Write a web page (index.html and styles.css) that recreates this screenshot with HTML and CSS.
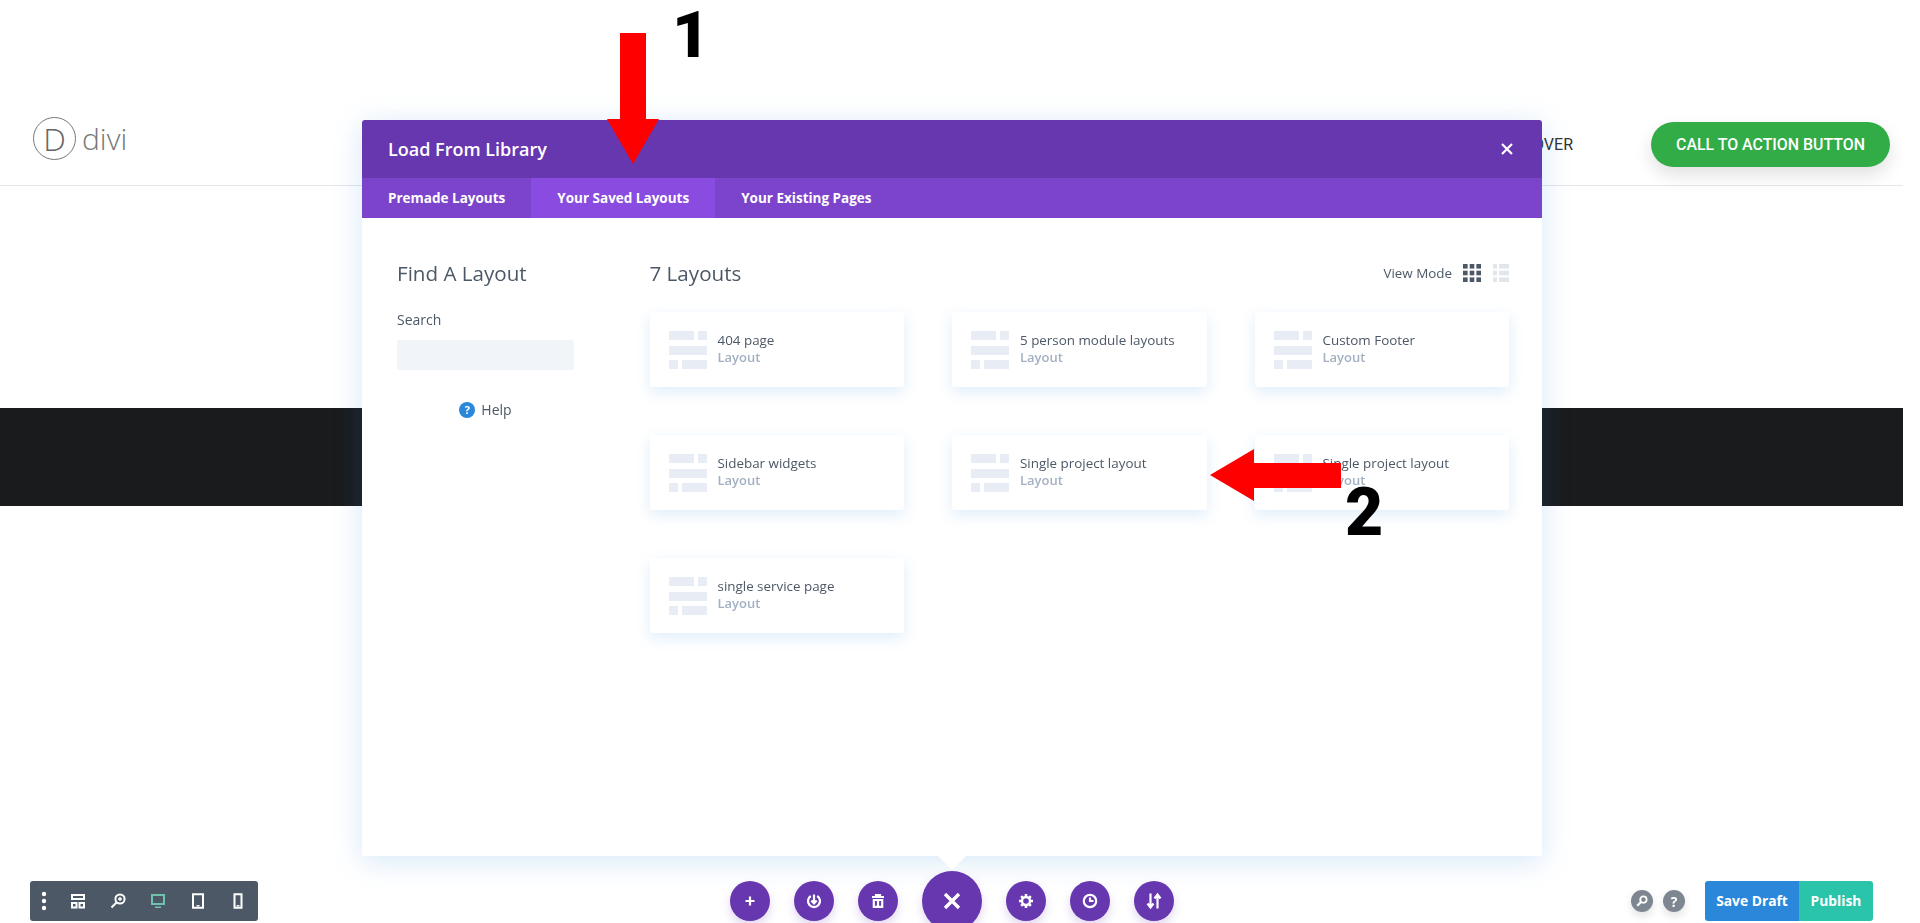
FILE: index.html
```html
<!DOCTYPE html>
<html lang="en">
<head>
  <meta charset="UTF-8" />
  <title>Load From Library</title>
  <link rel="stylesheet" href="styles.css">
</head>
<body>

  <svg class="defs" width="0" height="0">
    <symbol id="thumb" viewBox="0 0 38 38">
      <rect x="0" y="0" width="25" height="9" />
      <rect x="29" y="0" width="9" height="9" />
      <rect x="0" y="15" width="38" height="9" />
      <rect x="0" y="29" width="9" height="9" />
      <rect x="13" y="29" width="25" height="9" />
    </symbol>
  </svg>

  <div class="page">
    <header class="site-header">
      <div class="logo">
        <span class="logo-mark">D</span>
        <span class="logo-word">divi</span>
      </div>
      <div class="nav-right">
        <span class="nav-link">HOVER</span>
        <a class="cta">CALL TO ACTION BUTTON</a>
      </div>
    </header>
    <div class="band"></div>
  </div>

  <div class="modal">
    <div class="modal-title">
      <h2>Load From Library</h2>
      <svg class="close" width="14" height="14" viewBox="0 0 14 14"><path d="M2 2l10 10M12 2L2 12" /></svg>
    </div>
    <nav class="tabs">
      <a class="tab">Premade Layouts</a>
      <a class="tab active">Your Saved Layouts</a>
      <a class="tab">Your Existing Pages</a>
    </nav>
    <div class="modal-body">
      <aside class="filters">
        <h3>Find A Layout</h3>
        <label for="search">Search</label>
        <input id="search" type="text" />
        <div class="help"><span class="help-icon">?</span>Help</div>
      </aside>
      <section class="results">
        <div class="results-head">
          <h3>7 Layouts</h3>
          <div class="view-mode">
            <span>View Mode</span>
            <svg class="view-grid" width="18" height="18" viewBox="0 0 18 18">
              <rect x="0" y="0" width="4.6" height="4.6" /><rect x="6.7" y="0" width="4.6" height="4.6" /><rect x="13.4" y="0" width="4.6" height="4.6" />
              <rect x="0" y="6.7" width="4.6" height="4.6" /><rect x="6.7" y="6.7" width="4.6" height="4.6" /><rect x="13.4" y="6.7" width="4.6" height="4.6" />
              <rect x="0" y="13.4" width="4.6" height="4.6" /><rect x="6.7" y="13.4" width="4.6" height="4.6" /><rect x="13.4" y="13.4" width="4.6" height="4.6" />
            </svg>
            <svg class="view-list" width="16" height="18" viewBox="0 0 16 18">
              <rect x="0" y="0" width="4" height="4.6" /><rect x="6" y="0" width="10" height="4.6" />
              <rect x="0" y="6.7" width="4" height="4.6" /><rect x="6" y="6.7" width="10" height="4.6" />
              <rect x="0" y="13.4" width="4" height="4.6" /><rect x="6" y="13.4" width="10" height="4.6" />
            </svg>
          </div>
        </div>
        <div class="layout-grid">
          <div class="layout-card"><svg class="thumb"><use href="#thumb" /></svg><div class="card-text"><div class="name">404 page</div><div class="kind">Layout</div></div></div>
          <div class="layout-card"><svg class="thumb"><use href="#thumb" /></svg><div class="card-text"><div class="name">5 person module layouts</div><div class="kind">Layout</div></div></div>
          <div class="layout-card"><svg class="thumb"><use href="#thumb" /></svg><div class="card-text"><div class="name">Custom Footer</div><div class="kind">Layout</div></div></div>
          <div class="layout-card"><svg class="thumb"><use href="#thumb" /></svg><div class="card-text"><div class="name">Sidebar widgets</div><div class="kind">Layout</div></div></div>
          <div class="layout-card"><svg class="thumb"><use href="#thumb" /></svg><div class="card-text"><div class="name">Single project layout</div><div class="kind">Layout</div></div></div>
          <div class="layout-card"><svg class="thumb"><use href="#thumb" /></svg><div class="card-text"><div class="name">Single project layout</div><div class="kind">Layout</div></div></div>
          <div class="layout-card"><svg class="thumb"><use href="#thumb" /></svg><div class="card-text"><div class="name">single service page</div><div class="kind">Layout</div></div></div>
        </div>
      </section>
    </div>
    <span class="notch"></span>
  </div>

  <!-- bottom left: view modes -->
  <div class="view-bar">
    <span class="bar-item first"><svg width="14" height="20" viewBox="0 0 14 20"><circle cx="7" cy="3" r="2.2" /><circle cx="7" cy="10" r="2.2" /><circle cx="7" cy="17" r="2.2" /></svg></span>
    <span class="bar-item"><svg width="16" height="16" viewBox="0 0 16 16"><path class="line" d="M2 2h12v4H2zM2 10h4.5v4.5H2zM9.5 10H14v4.5H9.5z" /></svg></span>
    <span class="bar-item"><svg width="16" height="16" viewBox="0 0 16 16"><circle class="line" cx="10" cy="6" r="4.6" /><path class="line" d="M6.5 9.5L1.5 14.5" stroke-width="3" /><path class="line thin" d="M8 6h4M10 4v4" /></svg></span>
    <span class="bar-item"><svg class="on" width="16" height="16" viewBox="0 0 16 16"><path d="M1 1h14v11H1z" /><path d="M5 15h6v-1.5H5z" /><rect class="screen" x="3" y="3" width="10" height="7" /></svg></span>
    <span class="bar-item"><svg width="14" height="16" viewBox="0 0 14 16"><path class="line" d="M2 1.2h10v13.6H2z" /><path class="line thin" d="M5.5 12.8h3" /></svg></span>
    <span class="bar-item"><svg width="10" height="16" viewBox="0 0 10 16"><path class="line" d="M1.5 1.2h7v13.6h-7z" /><path class="line thin" d="M3.5 12.8h3" /></svg></span>
  </div>

  <!-- bottom centre: builder actions -->
  <div class="dock">
    <span class="dock-btn"><svg width="14" height="14" viewBox="0 0 14 14"><path d="M7 2.5v9M2.5 7h9" /></svg></span>
    <span class="dock-btn"><svg width="16" height="16" viewBox="0 0 16 16"><path d="M4.8 3A6 6 0 1 0 11.2 3" /><path d="M8 1.5v8.5M5.3 7.5L8 10.4l2.7-2.9" /></svg></span>
    <span class="dock-btn"><svg width="14" height="16" viewBox="0 0 14 16"><path d="M1 4h12M5 3.5V2h4v1.5M2.8 7h8.4v6.8H2.8zM7 7v6.8" /></svg></span>
    <span class="dock-btn large"><svg width="20" height="20" viewBox="0 0 20 20"><path d="M3 3l14 14M17 3L3 17" /></svg></span>
    <span class="dock-btn"><svg width="16" height="16" viewBox="0 0 16 16"><circle cx="8" cy="8" r="4" stroke-width="2.4" /><path stroke-width="2.6" d="M8 1v2.5M8 12.5V15M1 8h2.5M12.5 8H15M3.2 3.2l1.6 1.6M11.2 11.2l1.6 1.6M12.8 3.2l-1.6 1.6M4.8 11.2l-1.6 1.6" /></svg></span>
    <span class="dock-btn"><svg width="16" height="16" viewBox="0 0 16 16"><circle cx="8" cy="8" r="6.2" /><path d="M8 4.5V8h3.5" /></svg></span>
    <span class="dock-btn"><svg width="16" height="18" viewBox="0 0 16 18"><path d="M4.5 1.5v13M1.5 11.5l3 4 3-4M11.5 16.5v-13M8.5 6.5l3-4 3 4" /></svg></span>
  </div>

  <!-- bottom right: save -->
  <div class="save-bar">
    <span class="round"><svg width="12" height="12" viewBox="0 0 12 12"><circle cx="7.4" cy="4.6" r="3.2" /><path d="M5 7L1.2 10.8" stroke-width="2.2" /></svg></span>
    <span class="round">?</span>
    <div class="save-group">
      <a class="save-draft">Save Draft</a>
      <a class="publish">Publish</a>
    </div>
  </div>

  <!-- tutorial annotations -->
  <svg class="arrow arrow-down" width="52" height="131" viewBox="0 0 52 131"><path d="M13 0h26v86h13L26 131 0 86h13z" /></svg>
  <span class="step step-one">1</span>
  <svg class="arrow arrow-left" width="131" height="52" viewBox="0 0 131 52"><path d="M131 14v25H44v13L0 26 44 0v14z" /></svg>
  <span class="step step-two">2</span>

</body>
</html>
```

FILE: styles.css
```css
* {
  box-sizing: border-box;
}

html, body {
  margin: 0;
  height: 100%;
  overflow: hidden;
  background: #fff;
}

body {
  font-family: 'Open Sans', 'Noto Sans', sans-serif;
  color: #4c5866;
}

.defs {
  position: absolute;
}

.page {
  width: 1903px;
}

.site-header {
  height: 186px;
  padding: 0 13px 0 33px;
  border-bottom: 1px solid #e4e7ec;
  display: flex;
  justify-content: space-between;
  align-items: flex-end;
}

.logo {
  display: flex;
  align-items: center;
  gap: 6px;
  margin-bottom: 25px;
}

.logo-mark {
  width: 43px;
  height: 43px;
  border: 1px solid #777;
  border-radius: 50%;
  display: flex;
  align-items: center;
  justify-content: center;
  font-family: 'Open Sans', sans-serif;
  font-weight: 300;
  font-size: 32px;
  color: #666;
}

.logo-word {
  font-family: 'Open Sans', sans-serif;
  font-weight: 300;
  font-size: 30px;
  line-height: 43px;
  color: #777;
}

.nav-right {
  display: flex;
  align-items: center;
  gap: 78px;
  margin-bottom: 18px;
}

.nav-link {
  font-family: Roboto, sans-serif;
  font-size: 16px;
  color: #333;
}

.cta {
  width: 239px;
  height: 45px;
  border-radius: 23px;
  background: #31ac47;
  color: #fff;
  font-family: Roboto, sans-serif;
  font-weight: 500;
  font-size: 15.9px;
  display: flex;
  align-items: center;
  justify-content: center;
  box-shadow: 0 8px 18px rgba(0, 0, 0, 0.12);
}

.band {
  height: 98px;
  margin-top: 222px;
  background: #1a1b1d;
}

.modal {
  position: fixed;
  left: 362px;
  top: 120px;
  width: 1180px;
  height: 736px;
  background: #fff;
  border-radius: 3px;
  box-shadow: 0 5px 30px rgba(43, 135, 218, 0.2);
  display: flex;
  flex-direction: column;
}

.modal-title {
  height: 58px;
  padding: 0 28px 0 26px;
  background: #6737b0;
  border-radius: 3px 3px 0 0;
  display: flex;
  align-items: center;
  justify-content: space-between;
}

.modal-title h2 {
  margin: 0;
  font-size: 18px;
  font-weight: 600;
  color: #fff;
}

.close {
  fill: none;
  stroke: #fff;
  stroke-width: 2.2;
}

.tabs {
  height: 40px;
  background: #7c44cb;
  display: flex;
}

.tab {
  padding: 0 26px;
  font-size: 13.5px;
  font-weight: 700;
  line-height: 40px;
  color: #fff;
}

.tab.active {
  background: #8a4be0;
}

.modal-body {
  flex: 1;
  display: flex;
  padding: 41px 33px 0 35px;
}

.filters {
  width: 253px;
}

.filters h3, .results-head h3 {
  margin: 0;
  font-size: 20.6px;
  font-weight: 500;
  line-height: 28px;
  color: #4c5866;
}

.filters label {
  display: block;
  margin-top: 23px;
  font-size: 14px;
  font-weight: 500;
  line-height: 20px;
}

.filters input {
  display: block;
  width: 177px;
  height: 30px;
  margin-top: 10px;
  border: none;
  border-radius: 2px;
  background: #f1f5f9;
}

.help {
  width: 177px;
  margin-top: 30px;
  display: flex;
  justify-content: center;
  align-items: center;
  gap: 6px;
  font-size: 14px;
  font-weight: 500;
  line-height: 20px;
}

.help-icon {
  width: 16px;
  height: 16px;
  border-radius: 50%;
  background: #2b87da;
  color: #fff;
  font-size: 11px;
  font-weight: 700;
  line-height: 16px;
  text-align: center;
}

.results {
  flex: 1;
}

.results-head {
  display: flex;
  justify-content: space-between;
  align-items: center;
  height: 28px;
}

.view-mode {
  display: flex;
  align-items: center;
  font-size: 13.4px;
  font-weight: 500;
}

.view-grid {
  margin-left: 11px;
  fill: #4c5866;
}

.view-list {
  margin-left: 12px;
  fill: #e2e5e9;
}

.layout-grid {
  display: grid;
  grid-template-columns: repeat(3, 254.5px);
  grid-auto-rows: 75px;
  column-gap: 48px;
  row-gap: 48px;
  margin-top: 25px;
}

.layout-card {
  display: flex;
  align-items: center;
  gap: 11px;
  padding-left: 19px;
  background: #fff;
  border-radius: 3px;
  box-shadow: 0 5px 15px rgba(43, 135, 218, 0.15);
}

.thumb {
  width: 38px;
  height: 38px;
  fill: #e8edf5;
}

.card-text {
  padding-bottom: 2px;
}

.name {
  font-size: 13.4px;
  font-weight: 500;
  line-height: 18px;
  color: #4c5866;
}

.kind {
  font-size: 13px;
  font-weight: 600;
  line-height: 17px;
  color: #a3b0c2;
}

.notch {
  position: absolute;
  left: 576px;
  bottom: -14px;
  border-left: 14px solid transparent;
  border-right: 14px solid transparent;
  border-top: 14px solid #fff;
}

.view-bar {
  position: fixed;
  left: 30px;
  top: 881px;
  width: 228px;
  height: 40px;
  border-radius: 3px;
  background: #4c5866;
  display: flex;
  align-items: center;
  fill: #fff;
}

.bar-item {
  width: 40px;
  display: flex;
  justify-content: center;
}

.bar-item.first {
  width: 28px;
}

.view-bar .line {
  fill: none;
  stroke: #fff;
  stroke-width: 2;
}

.view-bar .line.thin {
  stroke-width: 1.4;
}

.view-bar .on {
  fill: #6fc3ae;
}

.view-bar .screen {
  fill: #4c5866;
}

.dock {
  position: fixed;
  left: 730px;
  top: 871px;
  height: 60px;
  display: flex;
  align-items: center;
  gap: 24px;
}

.dock-btn {
  width: 40px;
  height: 40px;
  border-radius: 50%;
  background: #6737b0;
  display: flex;
  align-items: center;
  justify-content: center;
  box-shadow: 0 5px 10px rgba(103, 55, 176, 0.2);
}

.dock-btn.large {
  width: 60px;
  height: 60px;
}

.dock-btn svg {
  fill: none;
  stroke: #fff;
  stroke-width: 2.2;
}

.dock-btn.large svg {
  stroke-width: 3.4;
}

.save-bar {
  position: fixed;
  left: 1631px;
  top: 881px;
  height: 40px;
  display: flex;
  align-items: center;
  gap: 10px;
}

.round {
  width: 22px;
  height: 22px;
  border-radius: 50%;
  background: #7e8791;
  color: #fff;
  font-size: 14px;
  font-weight: 700;
  display: flex;
  align-items: center;
  justify-content: center;
  box-shadow: 0 4px 8px rgba(0, 0, 0, 0.12);
}

.round svg {
  fill: none;
  stroke: #fff;
  stroke-width: 1.8;
}

.save-group {
  margin-left: 10px;
  display: flex;
  height: 40px;
  border-radius: 3px;
  overflow: hidden;
  color: #fff;
  font-size: 13.8px;
  font-weight: 700;
  line-height: 40px;
}

.save-draft {
  width: 94px;
  text-align: center;
  background: #2b87da;
}

.publish {
  width: 74px;
  text-align: center;
  background: #29c4a9;
}

.arrow {
  position: fixed;
  fill: #fe0000;
}

.arrow-down {
  left: 607px;
  top: 33px;
}

.arrow-left {
  left: 1210px;
  top: 449px;
}

.step {
  position: fixed;
  font-family: Roboto, sans-serif;
  font-weight: 900;
  color: #000;
  line-height: 1;
}

.step-one {
  left: 672px;
  top: 3px;
  font-size: 65px;
}

.step-two {
  left: 1345px;
  top: 480px;
  font-size: 66px;
}
```
